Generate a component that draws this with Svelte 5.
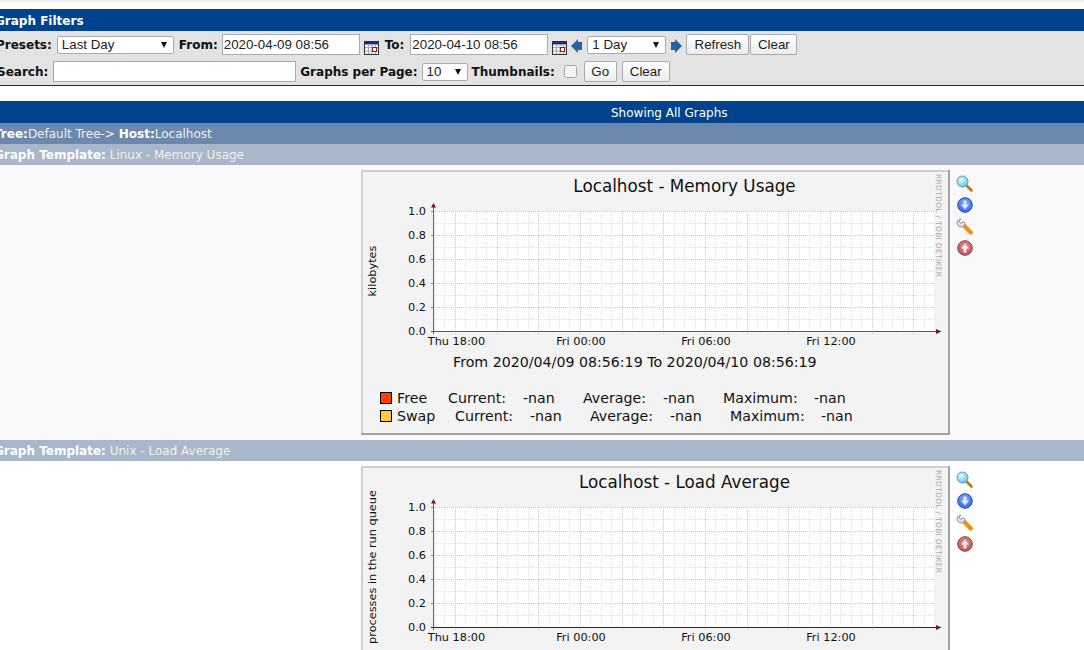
<script>
  const majorX = Array.from({ length: 12 }, (_, i) => 455.5 + i * 41.67);
  const minorX = Array.from({ length: 48 }, (_, i) => 434.5 + i * 10.42);
  const majorY = [211, 235, 259, 283, 307];
  const minorY = [223, 247, 271, 295, 319];
  const yLabels = [['1.0', 215], ['0.8', 239], ['0.6', 263], ['0.4', 287], ['0.2', 311], ['0.0', 335]];
  const xLabels = [['Thu 18:00', 456.5], ['Fri 00:00', 581], ['Fri 06:00', 706], ['Fri 12:00', 831]];
  const graphs = [
    {
      template: 'Linux - Memory Usage', title: 'Localhost - Memory Usage', ylabel: 'kilobytes', bg: 'tinted',
      legend: [
        { color: '#ff3f00', y: 403, cols: [['Free', 397], ['Current:', 448], ['-nan', 523], ['Average:', 583], ['-nan', 663], ['Maximum:', 723], ['-nan', 814]] },
        { color: '#ffc73b', y: 421, cols: [['Swap', 397], ['Current:', 455], ['-nan', 530], ['Average:', 590], ['-nan', 670], ['Maximum:', 730], ['-nan', 821]] }
      ]
    },
    { template: 'Unix - Load Average', title: 'Localhost - Load Average', ylabel: 'processes in the run queue', bg: 'plain', legend: [] }
  ];
</script>

<div class="page">
  <div class="topline"></div>
  <div class="bar navy head"><span><b>Graph Filters</b></span></div>
  <div class="filters">
    <div class="row">
      <span class="lab first presets">Presets:</span>
      <span class="sel w117"><select><option>Last Day</option></select></span>
      <span class="lab">From:</span>
      <input class="txt w138 from" value="2020-04-09 08:56" />
      <svg class="cal" viewBox="0 0 15 14" width="15" height="14">
        <rect x=".5" y=".5" width="14" height="13" fill="#f4f1e6" stroke="#333"/>
        <rect x="1" y="1" width="13" height="2.4" fill="#1a2a8a"/>
        <path d="M1 6.500h13M1 10h13M4.500 4v9M8 4v9M11.500 4v9" stroke="#a8a8c8" stroke-width="1"/>
        <rect x="8.500" y="6.500" width="4" height="4" fill="#fff" stroke="#a01020"/>
      </svg>
      <span class="lab to">To:</span>
      <input class="txt w138" value="2020-04-10 08:56" />
      <svg class="cal" viewBox="0 0 15 14" width="15" height="14">
        <rect x=".5" y=".5" width="14" height="13" fill="#f4f1e6" stroke="#333"/>
        <rect x="1" y="1" width="13" height="2.4" fill="#1a2a8a"/>
        <path d="M1 6.500h13M1 10h13M4.500 4v9M8 4v9M11.500 4v9" stroke="#a8a8c8" stroke-width="1"/>
        <rect x="8.500" y="6.500" width="4" height="4" fill="#fff" stroke="#a01020"/>
      </svg>
      <svg class="arrow" viewBox="0 0 12 14" width="12" height="14"><path d="M0 7 7 0v3h4v8H7v3z" fill="#24659b"/></svg>
      <span class="sel w79"><select><option>1 Day</option></select></span>
      <svg class="arrow" viewBox="0 0 12 14" width="12" height="14"><path d="M12 7 5 0v3H1v8h4v3z" fill="#24659b"/></svg>
      <button class="w63">Refresh</button>
      <button class="w47">Clear</button>
    </div>
    <div class="row">
      <span class="lab first">Search:</span>
      <input class="txt w243" />
      <span class="lab gp">Graphs per Page:</span>
      <span class="sel w46"><select><option>10</option></select></span>
      <span class="lab th">Thumbnails:</span>
      <input class="chk" type="checkbox" />
      <button class="w33">Go</button>
      <button class="w48">Clear</button>
    </div>
  </div>

  <div class="bar navy showing"><span>Showing All Graphs</span></div>
  <div class="bar tree"><span><b>Tree:</b>Default Tree-&gt; <b>Host:</b>Localhost</span></div>

  {#each graphs as g, i}
    <div class="bar tpl"><span><b>Graph Template:</b> {g.template}</span></div>
    <div class="graphrow {g.bg}">
      <svg class="graph" width="589" height="265" viewBox="361 170 589 265">
        <rect x="361" y="170" width="589" height="265" fill="#f3f3f3"/>
        <path d="M361 171h588M362 170v264" stroke="#cfcfcf" stroke-width="2"/>
        <path d="M949 170v265M361 434h589" stroke="#a3a3a3" stroke-width="2" fill="none"/>
        <rect x="434" y="211" width="500" height="120" fill="#fff"/>
        {#each minorX as x}
          <line x1={x} x2={x} y1="211" y2="331" class="minor"/>
        {/each}
        {#each minorY as y}
          <line x1="434" x2="934" y1={y + .5} y2={y + .5} class="minor"/>
        {/each}
        {#each majorX as x}
          <line x1={x} x2={x} y1="211" y2="334" class="major"/>
        {/each}
        {#each majorY as y}
          <line x1="431" x2="934" y1={y + .5} y2={y + .5} class="major"/>
        {/each}
        <line x1="431" x2="434" y1="211.500" y2="211.500" stroke="#888"/>
        <line x1="431" x2="434" y1="235.500" y2="235.500" stroke="#888"/>
        <line x1="431" x2="434" y1="259.500" y2="259.500" stroke="#888"/>
        <line x1="431" x2="434" y1="283.500" y2="283.500" stroke="#888"/>
        <line x1="431" x2="434" y1="307.500" y2="307.500" stroke="#888"/>
        <line x1="433.500" x2="433.500" y1="207" y2="334" stroke="#666"/>
        <line x1="431" x2="937" y1="331.500" y2="331.500" stroke={i === 0 ? '#7c4a4a' : '#3a2020'}/>
        <path d="M431 207.500 433.500 203l2.500 4.500zM936 329l5.500 2.500-5.500 2.500z" fill="#7f1018"/>
        <text class="title" x="684.500" y="192">{g.title}</text>
        <text class="tick" text-anchor="middle" transform="translate(376 271) rotate(-90)">{g.ylabel}</text>
        {#each yLabels as [t, y]}
          <text class="tick" x="426" {y} text-anchor="end">{t}</text>
        {/each}
        {#each xLabels as [t, x]}
          <text class="tick" {x} y="345" text-anchor="middle">{t}</text>
        {/each}
        <text class="water" transform="translate(936 174) rotate(90)">RRDTOOL / TOBI OETIKER</text>
        <text class="legend" x="453" y="367">From 2020/04/09 08:56:19 To 2020/04/10 08:56:19</text>
        {#each g.legend as l}
          <rect x="380.500" y={l.y - 10.5} width="11" height="11" fill={l.color} stroke="#000"/>
          {#each l.cols as [t, x]}
            <text class="legend" {x} y={l.y}>{t}</text>
          {/each}
        {/each}
      </svg>
      <div class="icons">
        <svg viewBox="0 0 17 17" width="17" height="17">
          <defs>
            <radialGradient id="lens{i}" cx=".4" cy=".35" r=".7"><stop offset="0" stop-color="#e8fbff"/><stop offset="1" stop-color="#5bbce8"/></radialGradient>
            <radialGradient id="blue{i}" cx=".5" cy=".35" r=".7"><stop offset="0" stop-color="#7fb0ff"/><stop offset="1" stop-color="#2a5fe0"/></radialGradient>
            <radialGradient id="red{i}" cx=".5" cy=".35" r=".7"><stop offset="0" stop-color="#e09090"/><stop offset="1" stop-color="#b85050"/></radialGradient>
          </defs>
          <path d="M10.500 10.500 15.500 15.500" stroke="#b8791c" stroke-width="2.600" stroke-linecap="round"/>
          <circle cx="6.500" cy="6.500" r="5.500" fill="url(#lens{i})" stroke="#5aa0c8"/>
        </svg>
        <svg viewBox="0 0 16 16" width="16" height="16">
          <circle cx="8" cy="8" r="7.300" fill="url(#blue{i})" stroke="#2a4fb0"/>
          <path d="M6.500 3.500h3v4h2.500L8 12.500 4 7.500h2.500z" fill="#dfeaff"/>
        </svg>
        <svg viewBox="0 0 17 17" width="17" height="17">
          <path d="M8.500 8 14.800 14.500" stroke="#ef8f14" stroke-width="4.200" stroke-linecap="round"/>
          <path d="M5 1 3 3.400 4.800 5.400 7.400 3.400c1 .6 1.700 1.800 1.300 3.200-.4 1.700-2.300 2.700-4.200 2.300C2.200 8.500.8 6.600 1.100 4.500 1.400 2.500 3 1 5 1z" fill="#e2e2e8" stroke="#858592" stroke-width=".9"/>
        </svg>
        <svg viewBox="0 0 16 16" width="16" height="16">
          <circle cx="8" cy="8" r="7.300" fill="url(#red{i})" stroke="#8f4040"/>
          <path d="M6.500 12.500h3v-4h2.500L8 3.500 4 8.500h2.500z" fill="#fbe8e8"/>
        </svg>
      </div>
    </div>
  {/each}
</div>

<style>
  :global(body) { margin: 0; background: #fff; overflow: hidden; }
  .page { font: 12px "DejaVu Sans", Verdana, sans-serif; width: 1084px; height: 650px; overflow: hidden; }
  .topline { height: 2px; background: #f1f1f1; margin-bottom: 7px; }
  .bar { color: #f0f0f0; white-space: pre; display: flex; align-items: center; box-sizing: border-box; }
  .bar b { color: #fff; }
  .navy { background: #00438c; height: 22px; color: #fff; padding-top: 1px; }
  .head span { margin-left: -5px; }
  .filters { background: #e3e3e3; padding: 3px 0; height: 48px; border-bottom: 1px solid #00336c; display: flex; flex-direction: column; gap: 6px; margin-bottom: 15px; }
  .row { display: flex; align-items: center; height: 21px; }
  .lab { font-weight: bold; color: #111; white-space: nowrap; }
  .first { margin-left: -3px; margin-right: 5px; }
  .presets { margin-left: -4px; }
  .row :is(select, input, button) { box-sizing: border-box; font: 13.33px "Liberation Sans", Arial, sans-serif; color: #222; margin: 0; }
  .sel { position: relative; display: block; height: 18px; flex: none; }
  .sel select { appearance: none; width: 100%; height: 18px; padding: 0 0 0 4px; background: #fff; border: 1px solid #aaa; border-radius: 2px; }
  .sel::after { content: ""; position: absolute; right: 7px; top: 6px; border: 3px solid transparent; border-top: 6px solid #111; border-bottom: 0; }
  .w117 { width: 117px; margin-right: 5px; }
  .w79 { width: 79px; margin: 0 4px; }
  .w46 { width: 46px; margin: 0 4px; }
  .row .txt { height: 21px; padding: 0 1px; background: #fff; border: 1px solid #aaa; flex: none; }
  .row .w138 { width: 138px; margin-left: 6px; }
  .row .from { margin-left: 4px; }
  .row .w243 { width: 243px; }
  .cal { margin: 7px 0 0 4px; flex: none; }
  .to { margin-left: 6px; }
  .arrow { margin: 2px 0 0 4px; flex: none; }
  .sel + .arrow { margin-left: 0; }
  .gp { margin-left: 4px; }
  .row .chk { width: 13px; height: 13px; margin-left: 9px; opacity: .55; }
  .row button { height: 21px; padding: 0; background: linear-gradient(#fff, #ececec); border: 1px solid #aaa; border-radius: 2px; flex: none; }
  .row .w63 { width: 63px; margin-left: 4px; }
  .row .w47 { width: 47px; margin-left: 1px; }
  .row .w33 { width: 33px; margin-left: 7px; }
  .row .w48 { width: 48px; margin-left: 5px; }
  .showing { padding-left: 611px; }
  .tree { background: #6d88ad; height: 21px; padding-top: 1px; }
  .tree span { margin-left: -6px; }
  .tpl { background: #a9b7cb; height: 21px; }
  .tpl span { margin-left: -6px; }
  .graphrow { display: flex; align-items: flex-start; padding: 5px 0 5px 361px; height: 265px; }
  .tinted { background: #f9f9f9; }
  .plain { background: #fff; }
  .graph { display: block; flex: none; }
  .minor { stroke: #dedede; stroke-dasharray: 1 1; shape-rendering: crispEdges; }
  .major { stroke: #f4b6b6; stroke-dasharray: 1 1; shape-rendering: crispEdges; }
  .graph text { font-family: "DejaVu Sans", sans-serif; fill: #111; }
  .graph .title { font-size: 16.800px; text-anchor: middle; }
  .graph .tick { font-size: 11.300px; }
  .graph .legend { font-size: 14.200px; }
  .graph .water { font-size: 7.500px; fill: #aaa; letter-spacing: .3px; }
  .icons { display: flex; flex-direction: column; align-items: center; gap: 5px; margin: 5px 0 0 6px; width: 17px; }
  .icons svg { display: block; }
</style>
